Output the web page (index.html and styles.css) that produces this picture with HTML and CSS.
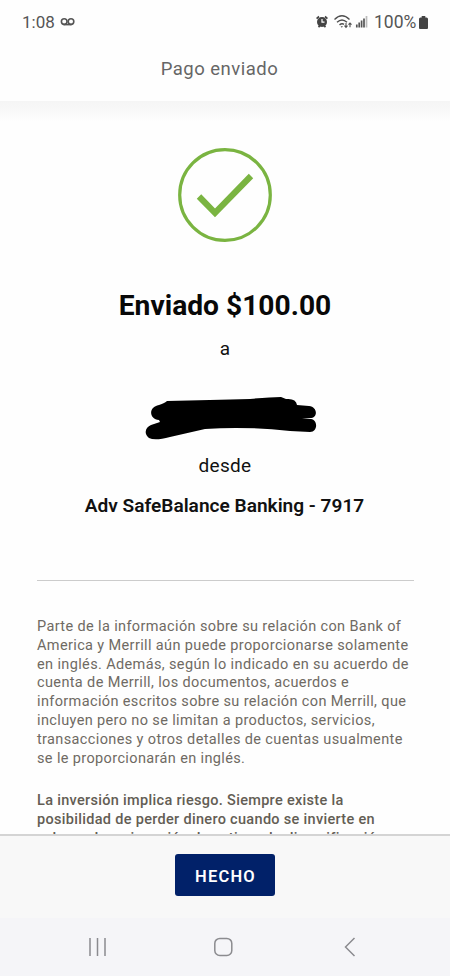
FILE: index.html
```html
<!DOCTYPE html>
<html lang="es">
<head>
<meta charset="utf-8">
<meta name="viewport" content="width=device-width">
<title>Pago enviado</title>
<link rel="stylesheet" href="styles.css">
</head>
<body>
<div class="status">
  <span class="time">1:08</span>
  <svg class="voicemail" width="16" height="10" viewBox="0 0 16 10" fill="none" stroke="#555" stroke-width="1.6"><circle cx="4.200" cy="4.600" r="2.800"/><circle cx="11" cy="4.600" r="2.800"/><path d="M3.500 7.600h8"/></svg>
  <svg class="icons" width="56" height="18" viewBox="0 0 56 18" fill="none">
    <circle cx="7" cy="9" r="5" fill="#444"/><path d="M1.6 5.6 4 3.5M12.4 5.6 10 3.5M3.5 14.2l1.6-1.6M10.5 14.2l-1.6-1.6" stroke="#444" stroke-width="1.7"/><path d="M7 6v3.2h2.5" stroke="#fff" stroke-width="1.2"/>
    <path d="M19.500 6.400Q27-.8 34.500 6.400M22 9.200q5-4.600 10 0M24.500 11.900q2.500-2.200 4.500-.5" stroke="#505050" stroke-width="1.4"/><path d="M25.600 13.200h2.400l-1.200 1.500z" fill="#505050"/>
    <path d="M31 10v4.200M29.500 12.700l1.500 1.700 1.500-1.700M35 14.3v-4.200M33.500 11.700 35 10l1.500 1.700" stroke="#505050" stroke-width="1.1"/>
    <path d="M41.800 14.500v-3M44.200 14.500v-5M46.600 14.500v-7M49 14.500v-9" stroke="#555" stroke-width="1.700"/><path d="M51.500 14.500V3" stroke="#bbb" stroke-width="1.700"/>
  </svg>
  <span class="percent">100%</span>
  <svg class="battery" width="9" height="13" viewBox="0 0 9 13"><path d="M2.7 0h3.6v1.5h1.2Q9 1.5 9 3v9q0 1-1 1H1q-1 0-1-1V3q0-1.500 1.500-1.500h1.200z" fill="#444"/></svg>
</div>
<header class="header"><h1>Pago enviado</h1></header>
<main class="content">
  <svg class="check" width="96" height="96" viewBox="0 0 96 96" fill="none" stroke="#7ab441"><circle cx="48" cy="48" r="45.300" stroke-width="3.200"/><path d="m22 49.500 16 16.300L74 29" stroke-width="6.200"/></svg>
  <h2 class="amount">Enviado $100.00</h2>
  <p class="word a">a</p>
  <svg class="scribble" width="172" height="44" viewBox="0 0 172 44" fill="#000"><path d="M14 9Q20 7 22 5 66 4 105 3 125 1 136 1L141 3Q151 2 152 9L164 10C173 11 173 22 165 22L157 22 166 23C173 24 173 36 165 36L145 35Q100 30 60 33L25 41Q10 45 4 42C-2 37 1 31 6 29L15 26 14 24C4 23 3 11 14 9Z"/></svg>
  <p class="word from">desde</p>
  <p class="account">Adv SafeBalance Banking - 7917</p>
  <hr>
  <p class="legal">Parte de la información sobre su relación con Bank of<br>America y Merrill aún puede proporcionarse solamente<br>en inglés. Además, según lo indicado en su acuerdo de<br>cuenta de Merrill, los documentos, acuerdos e<br>información escritos sobre su relación con Merrill, que<br>incluyen pero no se limitan a productos, servicios,<br>transacciones y otros detalles de cuentas usualmente<br>se le proporcionarán en inglés.</p>
  <p class="legal strong">La inversión implica riesgo. Siempre existe la<br>posibilidad de perder dinero cuando se invierte en<br>valores. La asignación de activos, la diversificación</p>
</main>
<footer class="footer"><button class="done">HECHO</button></footer>
<nav class="nav">
  <svg width="270" height="20" viewBox="0 0 270 20" fill="none" stroke="#8b8b8f" stroke-width="1.500"><path d="M2 1v18M9.500 1v18M17 1v18"/><rect x="126.800" y="1.400" width="17" height="17" rx="5"/><path d="m266.500 1-9 9 9 9"/></svg>
</nav>
</body>
</html>
```
FILE: styles.css
```css
* { box-sizing: border-box; }
body { margin: 0; width: 450px; height: 976px; overflow: hidden; display: flex; flex-direction: column; background: #fefefe; font-family: Roboto, sans-serif; color: #111; }
h1, h2, p { margin: 0; }
.status { height: 44px; flex: none; display: flex; align-items: center; padding: 0 22px 0 22px; color: #555; }
.time { font-size: 17px; width: 38px; }
.icons { margin-left: auto; }
.percent { width: 45px; margin-left: 3px; font-size: 17.500px; }
.header { height: 57px; flex: none; padding-top: 14px; text-align: center; }
.header h1 { font-size: 18.500px; line-height: 22px; font-weight: 400; letter-spacing: .5px; color: #666; padding-right: 11px; }
.content { height: 733px; flex: none; overflow: hidden; padding: 46px 36px 0 37px; display: flex; flex-direction: column; align-items: center; background: linear-gradient(#f5f5f5, #f8f8f8 9px, #fefefe 20px); }
.content > * { flex: none; }
.check { margin-right: 2px; }
.amount { margin-top: 45px; padding-right: 1px; font-size: 28.200px; line-height: 36px; font-weight: 700; color: #080808; }
.word { font-size: 19px; line-height: 24px; letter-spacing: .3px; }
.a { margin-top: 13px; padding-right: 1px; }
.scribble { margin: 35px 0 0 10px; }
.from { margin-top: 14px; padding-right: 1px; }
.account { margin-top: 16px; padding-right: 2px; font-size: 19.100px; line-height: 24px; font-weight: 600; }
hr { width: 100%; height: 1px; margin: 62px 0 37px; border: 0; background: #ccc; }
.legal { align-self: flex-start; white-space: nowrap; font-size: 14.500px; line-height: 18.800px; letter-spacing: .37px; color: #6f6a63; }
.strong { margin-top: 24px; font-weight: 500; letter-spacing: .31px; color: #635d54; }
.footer { height: 84px; flex: none; border-top: 2px solid #d4d4d4; background: #f8f8f8; display: flex; justify-content: center; align-items: flex-start; padding-top: 18px; }
.done { width: 100px; height: 42px; border: 0; border-radius: 3px; background: #012169; color: #fff; font: 600 16.500px Roboto, sans-serif; letter-spacing: 1.200px; padding: 2px 0 0 1px; }
.nav { flex: 1; background: #f5f5f8; padding: 19px 0 0 88px; }
```
